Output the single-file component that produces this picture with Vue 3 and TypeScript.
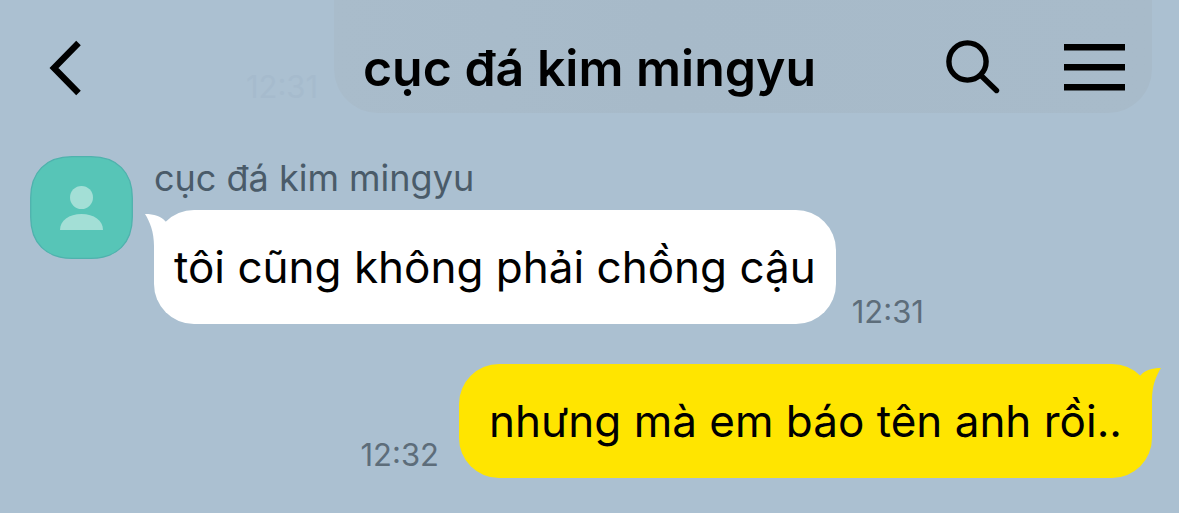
<script setup lang="ts">
interface Message {
  id: number
  text: string
  time: string
  own: boolean
}

const contact = 'cục đá kim mingyu'

const messages: Message[] = [
  { id: 1, text: 'tôi cũng không phải chồng cậu', time: '12:31', own: false },
  { id: 2, text: 'nhưng mà em báo tên anh rồi..', time: '12:32', own: true },
]
</script>

<template>
  <div class="chat">
    <header class="bar">
      <div class="ghost">
        <span class="ghost-time">12:31</span>
        <span class="ghost-bubble"></span>
      </div>
      <div class="side">
        <button class="icon-button" type="button" aria-label="Back">
          <svg width="34" height="58" viewBox="0 0 34 58" fill="none" stroke="#000" stroke-width="6.4">
            <path d="M29.500 4 5 29l24.500 25" stroke-linejoin="miter" />
          </svg>
        </button>
      </div>
      <h1 class="title">{{ contact }}</h1>
      <div class="side end">
        <button class="icon-button" type="button" aria-label="Search">
          <svg width="54" height="56" viewBox="0 0 54 56" fill="none" stroke="#000">
            <circle cx="21.500" cy="21.500" r="18.600" stroke-width="5.400" />
            <path d="M35.500 36 50.500 50.500" stroke-width="5.400" stroke-linecap="round" />
          </svg>
        </button>
        <button class="icon-button" type="button" aria-label="Menu">
          <svg width="61" height="48" viewBox="0 0 61 48" fill="#000">
            <path d="M0 0h61v6.500H0zM0 20h61v6.500H0zM0 40h61v6.500H0z" />
          </svg>
        </button>
      </div>
    </header>

    <main class="messages">
      <article v-for="m in messages" :key="m.id" class="row" :class="{ own: m.own }">
        <svg v-if="!m.own" class="avatar" width="103" height="103" viewBox="0 0 103 103">
          <path
            d="M42 .7H61C87 .7 102.300 16 102.300 42V61C102.300 87 87 102.300 61 102.300H42C16 102.300 .7 87 .7 61V42C.7 16 16 .7 42 .7Z"
            fill="#57c5b7"
            stroke="#4fb2ad"
            stroke-width="1.300"
          />
          <circle cx="51.500" cy="41.500" r="11.500" fill="#a3dfd6" />
          <path d="M30 74C30 64.500 39 58 51.500 58s21.500 6.500 21.500 16Z" fill="#a3dfd6" />
        </svg>
        <div class="content">
          <div v-if="!m.own" class="name">{{ contact }}</div>
          <div class="line">
            <div class="bubble">
              <svg class="tail" width="40" height="60" viewBox="0 0 40 60">
                <path d="M0 4C9 4 16 6 20.500 11.500L40 20V60H9V36C9 22 5 12 0 4Z" fill="currentColor" />
              </svg>
              <span class="text">{{ m.text }}</span>
            </div>
            <time class="time">{{ m.time }}</time>
          </div>
        </div>
      </article>
    </main>
  </div>
</template>

<style>
body {
  margin: 0;
  background: #abc0d1;
}
</style>

<style scoped>
.chat {
  min-height: 100vh;
  box-sizing: border-box;
  background: #abc0d1;
  color: #000;
  font-family: Inter, 'Noto Sans', sans-serif;
}

.bar {
  position: relative;
  display: grid;
  grid-template-columns: 1fr auto 1fr;
  align-items: center;
  height: 136px;
  padding: 0 49px;
}

.ghost {
  position: absolute;
  inset: 0 27px 23px 0;
  display: flex;
  justify-content: flex-end;
  align-items: flex-end;
  gap: 16px;
}

.ghost-time {
  padding-bottom: 8px;
  color: #a6bbcd;
  font-size: 31px;
  line-height: 36px;
}

.ghost-bubble {
  width: 71%;
  height: 100%;
  border-radius: 0 0 44px 44px;
  background: linear-gradient(90deg, #a9bccb, #a7bac9 40%, #a8bbca);
}

.side {
  position: relative;
  display: flex;
  align-items: center;
}

.end {
  justify-content: flex-end;
  gap: 64px;
  padding-right: 5px;
}

.icon-button {
  display: block;
  padding: 0;
  border: 0;
  background: none;
  cursor: pointer;
}

.icon-button svg,
.avatar,
.tail {
  display: block;
}

.title {
  position: relative;
  margin: 0;
  font-size: 50px;
  font-weight: 600;
  line-height: 60px;
  white-space: nowrap;
}

.messages {
  display: flex;
  flex-direction: column;
  gap: 40px;
  padding: 20px 27px 35px 30px;
}

.row {
  display: flex;
  align-items: flex-start;
  gap: 21px;
}

.row.own {
  justify-content: flex-end;
}

.avatar {
  flex: none;
}

.name {
  margin-bottom: 10px;
  color: #4a5b69;
  font-size: 36px;
  line-height: 44px;
}

.line {
  display: flex;
  align-items: flex-end;
  gap: 16px;
}

.own .line {
  flex-direction: row-reverse;
  gap: 20px;
}

.bubble {
  position: relative;
  padding: 30px 20px;
  border-radius: 40px;
  background: #fff;
  color: #fff;
  font-size: 44px;
  line-height: 54px;
}

.own .bubble {
  padding: 30px;
  background: #ffe500;
  color: #ffe500;
}

.text {
  position: relative;
  color: #000;
}

.tail {
  position: absolute;
  top: 0;
  left: -9px;
}

.own .tail {
  right: -9px;
  left: auto;
  transform: scaleX(-1);
}

.time {
  color: #5d6d7a;
  font-size: 31px;
  line-height: 24px;
}

.own .time {
  margin-bottom: 11px;
}
</style>
